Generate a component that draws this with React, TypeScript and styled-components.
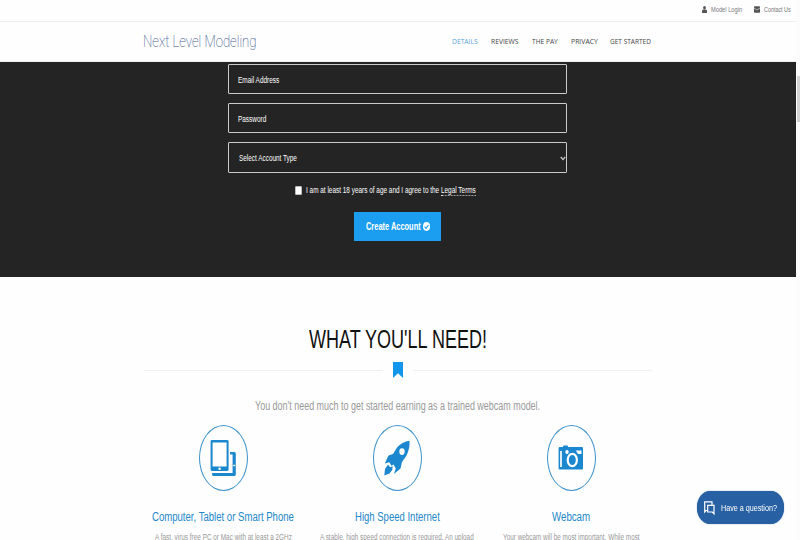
import React, { useLayoutEffect, useRef, useState } from "react";
import styled, { createGlobalStyle } from "styled-components";

const BLUE = "#1b87cf";
const SANS = '"Liberation Sans", Arial, sans-serif';

const GlobalStyle = createGlobalStyle`
  * { box-sizing: border-box; }
  html, body { margin: 0; height: 100%; overflow: hidden; background: #fefefe; }
  body { font-family: ${SANS}; color: #222; }
  a { color: inherit; text-decoration: none; }
`;

const Condensed = styled.span<{ $width: number }>`
  display: block;
  flex: none;
  width: ${(p) => p.$width}px;
  white-space: nowrap;
  overflow: visible;
`;

const Glyphs = styled.span`
  display: inline-block;
  transform-origin: 0 50%;
`;

/* Single line of text condensed to a given width. */
function Fit({ width, children }: { width: number; children: React.ReactNode }) {
  const ref = useRef<HTMLSpanElement>(null);
  const [scale, setScale] = useState(1);
  useLayoutEffect(() => {
    if (ref.current) setScale(width / ref.current.offsetWidth);
  }, [width]);
  return (
    <Condensed $width={width}>
      <Glyphs ref={ref} style={{ transform: `scaleX(${scale})` }}>{children}</Glyphs>
    </Condensed>
  );
}

const Page = styled.div`
  display: grid;
  grid-template-columns: 796px 4px;
  width: 800px;
  height: 540px;
  overflow: hidden;
`;

const Content = styled.div`
  display: flex;
  flex-direction: column;
  height: 540px;
  overflow: hidden;
`;

const Scrollbar = styled.div`
  padding: 76px 0 0 1px;
  background: #fcfcfc;
`;

const Thumb = styled.div`
  height: 46px;
  background: #d3d3d3;
`;

const TopBar = styled.div`
  flex: none;
  display: flex;
  justify-content: flex-end;
  align-items: center;
  gap: 12px;
  height: 22px;
  padding: 0 5px 2px 0;
  border-bottom: 1px solid #eee;
`;

const TopLink = styled.a`
  display: flex;
  align-items: center;
  gap: 4px;
  font-size: 7px;
  line-height: 10px;
  color: #777;
`;

const Header = styled.header`
  flex: none;
  display: flex;
  justify-content: space-between;
  align-items: center;
  height: 40px;
  padding: 0 145px 1px 143px;
  border-bottom: 1px solid #eef0f0;
`;

const Logo = styled.div`
  font-family: Roboto, sans-serif;
  font-weight: 100;
  font-size: 17px;
  line-height: 20px;
  color: #4d6291;
  -webkit-text-stroke: 0.15px #6d83b0;
`;

const Nav = styled.nav`
  display: flex;
  gap: 13px;
`;

const NavLink = styled.a<{ $active?: boolean }>`
  font-family: "Open Sans", sans-serif;
  font-size: 7px;
  line-height: 10px;
  padding-top: 1px;
  color: ${(p) => (p.$active ? "#55a5db" : "#444")};
`;

const Hero = styled.section`
  flex: none;
  display: flex;
  flex-direction: column;
  align-items: center;
  height: 215px;
  padding-top: 2px;
  background: #242424;
  color: #fff;
`;

const Field = styled.div<{ $select?: boolean }>`
  flex: none;
  display: flex;
  align-items: center;
  justify-content: space-between;
  width: 339px;
  height: ${(p) => (p.$select ? 31 : 30)}px;
  margin: 0 1px 9px 0;
  padding: 1px 0 0 ${(p) => (p.$select ? 10 : 8.5)}px;
  border: 1px solid #c9cbc8;
  border-radius: 1px;
  font-size: 8.5px;
  line-height: 10px;
`;

const Agreement = styled.label`
  display: flex;
  align-items: center;
  gap: 4px;
  height: 12px;
  margin: 2px 0 0 -25px;
  font-size: 8.5px;
  line-height: 12px;
`;

const Check = styled.span`
  width: 7px;
  height: 9px;
  border: 1px solid #bbb;
  border-radius: 1px;
  background: #fff;
`;

const Terms = styled.a`
  display: inline-block;
  line-height: 9px;
  border-bottom: 1px dotted #ddd;
`;

const Submit = styled.button`
  display: flex;
  align-items: center;
  gap: 2px;
  width: 87px;
  height: 29px;
  margin: 16px 0 0 -1px;
  padding: 0 0 0 12px;
  border: 0;
  background: #1b9df0;
  color: #fff;
  font: bold 10px/12px ${SANS};
  text-align: left;
`;

const Needs = styled.section`
  display: flex;
  flex-direction: column;
  align-items: center;
  width: 795px;
  padding-top: 47px;
`;

const Title = styled.h2`
  margin: 0;
  font-size: 25px;
  font-weight: 400;
  line-height: 30px;
  color: #111;
`;

const Divider = styled.div`
  display: flex;
  align-items: center;
  gap: 10px;
  width: 508px;
  height: 16px;
  margin-top: 8px;
`;

const Rule = styled.span`
  flex: 1;
  height: 1px;
  background: #efefef;
`;

const Lead = styled.p`
  margin: 21px 0 0;
  font-size: 12px;
  line-height: 14px;
  color: #999;
`;

const Features = styled.div`
  display: grid;
  grid-template-columns: repeat(3, 174px);
  margin: 12px 1px 0 0;
`;

const Feature = styled.article`
  display: flex;
  flex-direction: column;
  align-items: center;
`;

const Ring = styled.div`
  display: flex;
  align-items: center;
  justify-content: center;
  width: 49px;
  height: 66px;
  border: 1px solid #3a91ca;
  border-radius: 50%;
`;

const FeatureTitle = styled.h3`
  margin: 19px 0 0;
  font-size: 12px;
  font-weight: 400;
  line-height: 14px;
  color: #2387ca;
`;

const FeatureText = styled.p`
  margin: 8px 0 0;
  font-size: 8.5px;
  line-height: 10px;
  color: #999;
`;

const Chat = styled.button`
  position: fixed;
  left: 697px;
  top: 491px;
  display: flex;
  align-items: center;
  gap: 6px;
  width: 87px;
  height: 33px;
  padding: 0 0 0 7px;
  border: 0;
  border-radius: 13px / 16px;
  background: #2860a4;
  box-shadow: 0 0 1px #2860a4;
  color: #fff;
  font: 9.5px/12px ${SANS};
  text-align: left;
`;

const UserIcon = () => (
  <svg width="5" height="7" viewBox="0 0 5 7" fill="#555">
    <ellipse cx="2.5" cy="1.8" rx="1.4" ry="1.8" />
    <path d="M0 7V5.2Q0 3.8 1.3 3.5H3.7Q5 3.8 5 5.2V7Z" />
  </svg>
);

const MailIcon = () => (
  <svg width="6" height="7" viewBox="0 0 6 7">
    <rect y=".3" width="6" height="6.4" rx=".7" fill="#555" />
    <path d="M0 2 3 4 6 2" fill="none" stroke="#ddd" strokeWidth=".7" />
  </svg>
);

const Caret = () => (
  <svg width="6" height="5" viewBox="0 0 6 5" fill="none" stroke="#ccc" strokeWidth="1.3">
    <path d="M.8 1 3 3.6 5.2 1" />
  </svg>
);

const CheckIcon = () => (
  <svg width="7" height="9" viewBox="0 0 7 9">
    <ellipse cx="3.5" cy="4.5" rx="3.5" ry="4.4" fill="#fff" />
    <path d="M1.6 4.6 3 6.3 5.5 3" fill="none" stroke="#1b9df0" strokeWidth="1.2" />
  </svg>
);

const BookmarkIcon = () => (
  <svg width="10" height="16" viewBox="0 0 10 16" fill="#1296eb">
    <path d="M0 0H10V16L5 11.3 0 16Z" />
  </svg>
);

const DevicesIcon = () => (
  <svg width="26" height="38" viewBox="-.6 0 26 38">
    <path
      fill={BLUE}
      fillRule="evenodd"
      d="M1.4 1H16.6Q18 1 18 2.4V30.6Q18 32 16.6 32H1.4Q0 32 0 30.6V2.4Q0 1 1.4 1ZM2 3.5V27.5H16V3.5ZM9 28.5A1.2 1.2 0 1 0 9 31 1.2 1.2 0 1 0 9 28.5Z"
    />
    <path fill={BLUE} d="M19.5 13H23.8Q25.2 13 25.2 14.5V35.5Q25.2 37 23.8 37H3Q1.5 37 1.5 35.5V34H22V15.5H19.5Z" />
    <path d="M22.6 26.5H24.6" stroke="#fff" strokeWidth="1.4" />
  </svg>
);

const RocketIcon = () => (
  <svg width="26" height="36" viewBox="0 0 26 36">
    <path
      fill={BLUE}
      fillRule="evenodd"
      d="M25.5 .8Q18 2 13 7.5L9 14 4.5 15.5.8 23.5 5.2 22.3 7.5 25.8 9.5 24.5 11.8 28.5 10 34 16.5 28.5 18 22 22.5 15.5Q26 8.5 25.5 .8ZM18 8.2A2.7 3.4 0 1 1 18 15 2.7 3.4 0 1 1 18 8.2Z"
    />
    <path fill={BLUE} d="M4 24.5 6.2 27.2 8.7 26.3 8.2 30 5.5 33.5.3 35.4 1 29Z" />
  </svg>
);

const CameraIcon = () => (
  <svg width="26" height="26" viewBox="0 0 26 26">
    <path fill={BLUE} d="M5 2V1.4Q5 .5 6 .5H9Q10 .5 10 1.4V2H24Q25 2 25 3.2V23.3Q25 24.5 24 24.5H1.8Q.6 24.5.6 23.3V3.2Q.6 2 1.8 2Z" />
    <path d="M3 6V22" stroke="#fff" strokeWidth="1.7" />
    <ellipse cx="9" cy="7" rx="1.7" ry="2" fill="#fff" />
    <ellipse cx="14.3" cy="15" rx="4.6" ry="6.2" fill="none" stroke="#fff" strokeWidth="2.2" />
    <path fill="#fff" d="M17.8 5.5H23.5V9H20Z" />
  </svg>
);

const ChatIcon = () => (
  <svg width="11" height="14" viewBox="0 0 11 14" fill="none" stroke="#fff" strokeWidth="1.2">
    <path d="M3 9.5H2L.7 11V.8H8V4" />
    <path d="M3.7 4.4H10V12.8L8.3 11H3.7Z" />
  </svg>
);

const navItems = [
  { label: "DETAILS", width: 26, active: true },
  { label: "REVIEWS", width: 28 },
  { label: "THE PAY", width: 25.5 },
  { label: "PRIVACY", width: 26.5 },
  { label: "GET STARTED", width: 41 },
];

const features = [
  { icon: <DevicesIcon />, title: "Computer, Tablet or Smart Phone", width: 142, text: "A fast, virus free PC or Mac with at least a 2GHz", textWidth: 137 },
  { icon: <RocketIcon />, title: "High Speed Internet", width: 85, text: "A stable, high speed connection is required. An upload", textWidth: 154 },
  { icon: <CameraIcon />, title: "Webcam", width: 38, text: "Your webcam will be most important. While most", textWidth: 137 },
];

export default function App() {
  return (
    <>
      <GlobalStyle />
      <Page>
        <Content>
          <TopBar>
            <TopLink href="#"><UserIcon /><Fit width={31}>Model Login</Fit></TopLink>
            <TopLink href="#"><MailIcon /><Fit width={27}>Contact Us</Fit></TopLink>
          </TopBar>
          <Header>
            <Logo><Fit width={113.5}>Next Level Modeling</Fit></Logo>
            <Nav>
              {navItems.map((n) => (
                <NavLink key={n.label} href="#" $active={n.active}><Fit width={n.width}>{n.label}</Fit></NavLink>
              ))}
            </Nav>
          </Header>
          <Hero>
            <Field><Fit width={41}>Email Address</Fit></Field>
            <Field><Fit width={28}>Password</Fit></Field>
            <Field $select><Fit width={58}>Select Account Type</Fit><Caret /></Field>
            <Agreement>
              <Check />
              <Fit width={170}>I am at least 18 years of age and I agree to the <Terms href="#">Legal Terms</Terms></Fit>
            </Agreement>
            <Submit><Fit width={55}>Create Account</Fit><CheckIcon /></Submit>
          </Hero>
          <Needs>
            <Title><Fit width={178}>WHAT YOU'LL NEED!</Fit></Title>
            <Divider><Rule /><BookmarkIcon /><Rule /></Divider>
            <Lead><Fit width={285}>You don't need much to get started earning as a trained webcam model.</Fit></Lead>
            <Features>
              {features.map((f) => (
                <Feature key={f.title}>
                  <Ring>{f.icon}</Ring>
                  <FeatureTitle><Fit width={f.width}>{f.title}</Fit></FeatureTitle>
                  <FeatureText><Fit width={f.textWidth}>{f.text}</Fit></FeatureText>
                </Feature>
              ))}
            </Features>
          </Needs>
        </Content>
        <Scrollbar><Thumb /></Scrollbar>
      </Page>
      <Chat><ChatIcon /><Fit width={56}>Have a question?</Fit></Chat>
    </>
  );
}
